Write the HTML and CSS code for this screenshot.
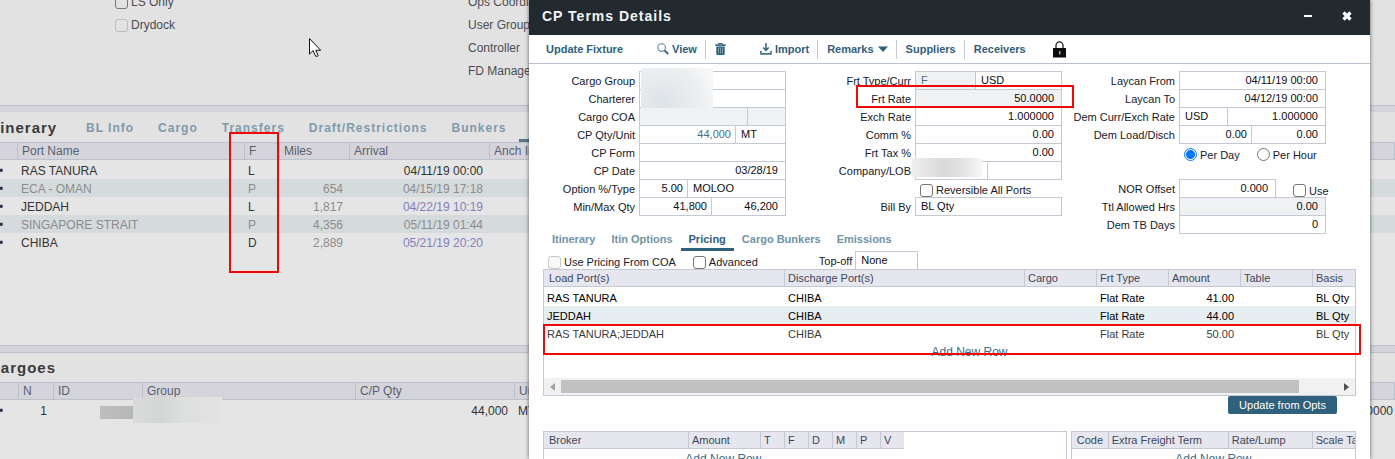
FILE: index.html
```
<!DOCTYPE html>
<html lang="en">
<head>
<meta charset="utf-8">
<title>CP Terms Details</title>
<link rel="stylesheet" href="styles.css">
</head>
<body>
<main class="app">
  <section class="voyage">
    <div class="flags">
      <label class="check"><input type="checkbox">LS Only</label>
      <label class="check"><input type="checkbox" disabled>Drydock</label>
    </div>
    <div class="owners">
      <span>Ops Coordinator</span>
      <span>User Group</span>
      <span>Controller</span>
      <span>FD Manager</span>
    </div>
  </section>

  <div class="splitter splitter-open"></div>
  <section class="itinerary">
    <div class="panel-head">
      <h2>Itinerary</h2>
      <nav class="panel-tabs">
        <a href="#">BL Info</a><a href="#">Cargo</a><a href="#">Transfers</a><a href="#">Draft/Restrictions</a><a href="#">Bunkers</a><span class="current"></span>
      </nav>
    </div>
    <table class="grid">
      <colgroup><col class="w30"><col class="w227"><col class="w35"><col class="w70"><col class="w140"><col></colgroup>
      <thead><tr><th></th><th>Port Name</th><th>F</th><th>Miles</th><th>Arrival</th><th>Anch In</th></tr></thead>
      <tbody>
        <tr><td class="dot">•</td><td>RAS TANURA</td><td>L</td><td></td><td class="num">04/11/19 00:00</td><td></td></tr>
        <tr class="passing"><td class="dot">•</td><td>ECA - OMAN</td><td>P</td><td class="num dim">654</td><td class="num">04/15/19 17:18</td><td></td></tr>
        <tr><td class="dot">•</td><td>JEDDAH</td><td>L</td><td class="num dim">1,817</td><td class="num computed">04/22/19 10:19</td><td></td></tr>
        <tr class="passing"><td class="dot">•</td><td>SINGAPORE STRAIT</td><td>P</td><td class="num dim">4,356</td><td class="num">05/11/19 01:44</td><td></td></tr>
        <tr><td class="dot">•</td><td>CHIBA</td><td>D</td><td class="num dim">2,889</td><td class="num computed">05/21/19 20:20</td><td></td></tr>
      </tbody>
    </table>
  </section>

  <div class="splitter"></div>
  <section class="cargoes">
    <div class="panel-head"><h2>Cargoes</h2></div>
    <table class="grid">
      <colgroup><col class="w31"><col class="w35"><col class="w89"><col class="w213"><col class="w159"><col class="w140"><col></colgroup>
      <thead><tr><th></th><th>N</th><th>ID</th><th>Group</th><th>C/P Qty</th><th>Unit</th><th></th></tr></thead>
      <tbody>
        <tr><td class="dot">•</td><td class="num">1</td><td class="hidden-id"><i class="mask mask-id"></i></td><td class="hidden-group"><i class="mask mask-group"></i></td><td class="num">44,000</td><td>MT</td><td class="num edge">0.0000</td></tr>
      </tbody>
    </table>
  </section>
</main>

<svg class="pointer" viewBox="0 0 12 19"><path d="M.5 .5v15.6l3.6-3.5 2.5 5.6h2.2l.3-.7-2.3-5.2h4.9z" fill="#fff" stroke="#111" stroke-width="1"/></svg>

<section class="dialog" role="dialog" aria-labelledby="dialog-title">
  <header class="titlebar">
    <h1 id="dialog-title">CP Terms Details</h1>
    <button class="win" type="button" aria-label="Minimize"><svg viewBox="0 0 10 10"><path d="M1 5h8" stroke="#fff" stroke-width="2"/></svg></button>
    <button class="win" type="button" aria-label="Close"><svg viewBox="0 0 10 10"><path d="M1.500 1.500l7 7M8.500 1.500l-7 7" stroke="#fff" stroke-width="3.200"/></svg></button>
  </header>

  <div class="toolbar">
    <button type="button" class="update">Update Fixture</button>
    <button type="button" class="ruled view"><svg class="ico" viewBox="0 0 12 12"><circle cx="4.6" cy="4.6" r="3.8" fill="none" stroke="#5d86a0" stroke-width="1.1"/><path d="M7.4 7.4l3.8 3.6" stroke="#2f607c" stroke-width="1.8"/></svg>View</button>
    <button type="button" class="trash" aria-label="Delete"><svg viewBox="0 0 11 12"><path d="M3.5 1.5V.6h4v.9" fill="none" stroke="#2f607c"/><path d="M.3 1.3h10.4v1.6H.3z" fill="#2f607c"/><path d="M1.3 3.4h8.4V11q0 1-1 1H2.300q-1 0-1-1z" fill="#2f607c"/><path d="M3.500 4.600v6M5.500 4.600v6M7.500 4.600v6" stroke="#8fabbb" stroke-width=".8"/></svg></button>
    <button type="button" class="ruled import"><svg class="ico" viewBox="0 0 12 12"><path d="M6 0v6M3.300 4.600L6 7.400l2.700-2.800" fill="none" stroke="#2f607c" stroke-width="1.5"/><path d="M1 8v2.800h10V8" fill="none" stroke="#47728b" stroke-width="1.7"/></svg>Import</button>
    <button type="button" class="ruled">Remarks<svg class="caret" viewBox="0 0 10 6"><path d="M0 .5h10L5 6z" fill="#2f607c"/></svg></button>
    <button type="button" class="ruled">Suppliers</button>
    <button type="button">Receivers</button>
    <svg class="lock" viewBox="0 0 13 17"><path d="M3 8V4.500a3.500 3.700 0 0 1 7 0V8" fill="none" stroke="#222" stroke-width="1.300"/><path d="M0 7h13v9.500H0z" fill="#0c0c0c"/><path d="M6 10h1.400v3.500H6z" fill="#9db7c8"/></svg>
  </div>

  <form class="terms">
    <div class="column c1">
      <label for="group">Cargo Group</label><div class="field"><input id="group"></div>
      <label for="charterer">Charterer</label><div class="field"><input id="charterer"></div>
      <label for="coa">Cargo COA</label><div class="field"><input id="coa" class="ro s107" readonly><input class="ro" readonly aria-label="COA line"></div>
      <label for="qty">CP Qty/Unit</label><div class="field"><input id="qty" class="n link s95" value="44,000"><input value="MT" aria-label="Unit"></div>
      <label for="form">CP Form</label><div class="field"><input id="form"></div>
      <label for="date">CP Date</label><div class="field"><input id="date" class="n" value="03/28/19"></div>
      <label for="option">Option %/Type</label><div class="field"><input id="option" class="n s47" value="5.00"><input value="MOLOO" aria-label="Option type"></div>
      <label for="min">Min/Max Qty</label><div class="field"><input id="min" class="n s71" value="41,800"><input class="n" value="46,200" aria-label="Max quantity"></div>
      <i class="mask mask-party"></i>
    </div>
    <div class="column c2">
      <label for="ftype">Frt Type/Curr</label><div class="field"><input id="ftype" class="ro link s59" value="F" readonly><input value="USD" aria-label="Freight currency"></div>
      <label for="frate">Frt Rate</label><div class="field"><input id="frate" class="n ro" value="50.0000" readonly></div>
      <label for="exch">Exch Rate</label><div class="field"><input id="exch" class="n" value="1.000000"></div>
      <label for="comm">Comm %</label><div class="field"><input id="comm" class="n" value="0.00"></div>
      <label for="tax">Frt Tax %</label><div class="field"><input id="tax" class="n" value="0.00"></div>
      <label for="company">Company/LOB</label><div class="field"><input id="company" class="s71"><input aria-label="LOB"></div>
      <label class="check inset"><input type="checkbox">Reversible All Ports</label>
      <label for="bill">Bill By</label><div class="field"><input id="bill" value="BL Qty"></div>
      <i class="mask mask-company"></i>
      <div class="marker"></div>
    </div>
    <div class="column c3">
      <label for="lfrom">Laycan From</label><div class="field"><input id="lfrom" class="n" value="04/11/19 00:00"></div>
      <label for="lto">Laycan To</label><div class="field"><input id="lto" class="n" value="04/12/19 00:00"></div>
      <label for="dcurr">Dem Curr/Exch Rate</label><div class="field"><input id="dcurr" class="s47" value="USD"><input class="n" value="1.000000" aria-label="Demurrage exchange rate"></div>
      <label for="dload">Dem Load/Disch</label><div class="field"><input id="dload" class="n s71" value="0.00"><input class="n" value="0.00" aria-label="Demurrage discharge"></div>
      <div class="period">
        <label class="check"><input type="radio" name="per" checked>Per Day</label>
        <label class="check"><input type="radio" name="per">Per Hour</label>
      </div>
      <label for="nor" class="nor">NOR Offset</label><div class="nor offset"><div class="field"><input id="nor" class="n" value="0.000"></div><label class="check"><input type="checkbox">Use</label></div>
      <label for="hrs">Ttl Allowed Hrs</label><div class="field"><input id="hrs" class="n ro" value="0.00" readonly></div>
      <label for="tb">Dem TB Days</label><div class="field"><input id="tb" class="n" value="0"></div>
    </div>
  </form>

  <nav class="tabs">
    <a href="#">Itinerary</a><a href="#">Itin Options</a><a href="#" class="current">Pricing</a><a href="#">Cargo Bunkers</a><a href="#">Emissions</a>
  </nav>

  <div class="options">
    <label class="check"><input type="checkbox" disabled>Use Pricing From COA</label>
    <label class="check advanced"><input type="checkbox">Advanced</label>
    <label class="topoff" for="topoff">Top-off</label>
    <div class="field"><input id="topoff" value="None"></div>
  </div>

  <div class="box pricing">
    <table class="lines">
      <colgroup><col class="w241"><col><col class="w72"><col class="w72"><col class="w72"><col class="w72"><col class="w42"></colgroup>
      <thead><tr><th>Load Port(s)</th><th>Discharge Port(s)</th><th>Cargo</th><th>Frt Type</th><th>Amount</th><th>Table</th><th>Basis</th></tr></thead>
      <tbody>
        <tr><td>RAS TANURA</td><td>CHIBA</td><td></td><td>Flat Rate</td><td class="num">41.00</td><td></td><td>BL Qty</td></tr>
        <tr class="alt"><td>JEDDAH</td><td>CHIBA</td><td></td><td>Flat Rate</td><td class="num">44.00</td><td></td><td>BL Qty</td></tr>
        <tr class="auto"><td>RAS TANURA;JEDDAH</td><td>CHIBA</td><td></td><td>Flat Rate</td><td class="num">50.00</td><td></td><td>BL Qty</td></tr>
      </tbody>
    </table>
    <a href="#" class="add">Add New Row</a>
    <div class="scroll">
      <svg viewBox="0 0 5 8"><path d="M5 0v8L0 4z" fill="#a3a3a3"/></svg>
      <div class="track"><div class="thumb"></div></div>
      <svg viewBox="0 0 5 8"><path d="M0 0v8l5-4z" fill="#505050"/></svg>
    </div>
    <div class="marker"></div>
  </div>
  <div class="actions"><button type="button">Update from Opts</button></div>

  <div class="bottom">
    <div class="box brokers">
      <table class="lines">
        <colgroup><col class="w145"><col class="w72"><col class="w24"><col class="w24"><col class="w24"><col class="w24"><col class="w24"><col class="w23"></colgroup>
        <thead><tr><th>Broker</th><th>Amount</th><th>T</th><th>F</th><th>D</th><th>M</th><th>P</th><th>V</th></tr></thead>
      </table>
      <a href="#" class="add">Add New Row</a>
    </div>
    <div class="box extras">
      <table class="lines">
        <colgroup><col class="w37"><col class="w120"><col class="w84"><col></colgroup>
        <thead><tr><th>Code</th><th>Extra Freight Term</th><th>Rate/Lump</th><th>Scale Table</th></tr></thead>
      </table>
      <a href="#" class="add">Add New Row</a>
    </div>
  </div>
</section>
<div class="marker marker-function"></div>
</body>
</html>
```
FILE: styles.css
```
* { box-sizing: border-box; }
html, body { height: 100%; }
body {
  margin: 0;
  position: relative;
  overflow: hidden;
  background: #e2e2e2;
  font-family: "Liberation Sans", Arial, sans-serif;
  font-size: 12px;
  color: #333;
}
a { text-decoration: none; }
button { font: inherit; border: 0; padding: 0; background: none; }
table { border-collapse: separate; border-spacing: 0; table-layout: fixed; width: 100%; }
td, th { padding: 0; font-weight: normal; text-align: left; white-space: nowrap; overflow: hidden; }
.num { text-align: right; }
.check { display: flex; align-items: center; gap: 3px; white-space: nowrap; }
.check input {
  appearance: none;
  flex: none;
  width: 13px;
  height: 13px;
  margin: 0;
  border: 1px solid #767676;
  border-radius: 3px;
  background: #fff;
}
.check input[type="radio"] { border-radius: 50%; }
.check input[type="radio"]:checked {
  border-color: #0075ff;
  background: radial-gradient(circle, #0075ff 4px, #fff 5px);
}
.check input:disabled { border-color: #c8c8c8; background: #f7f7f7; }

/* Voyage page behind the dialog */
.app { margin-left: -12px; height: 100%; overflow: hidden; }
.voyage { display: flex; height: 105px; color: #4a4d52; }
.flags, .owners { display: flex; flex-direction: column; margin-top: -9px; line-height: 23px; }
.flags { width: 353px; margin-left: 127px; }
.flags .check { height: 23px; }
.flags .check input { background: transparent; }
.flags .check input:disabled { border-color: #bdbdbd; }
.splitter { height: 8px; background: #d5d4db; border: solid #bcc0ca; border-width: 1px 0; }
.splitter-open { height: 7px; border-bottom: 0; }
.panel-head { display: flex; align-items: center; height: 30px; background: #e2e2e2; }
.panel-head h2 { margin: 0; padding-left: 1px; width: 90px; font-size: 15px; letter-spacing: 1px; color: #3a3a3c; }
.panel-tabs { display: flex; align-self: stretch; gap: 8px; }
.panel-tabs a {
  padding: 0 8px;
  line-height: 33px;
  font-weight: bold;
  letter-spacing: 1px;
  color: #7f9aab;
}
.panel-tabs .current { width: 80px; margin-left: -4px; border-bottom: 3px solid #54788c; }
.itinerary { height: 233px; background: #e5e5e5; }
.cargoes { background: #e5e5e5; height: 110px; }
.cargoes .panel-head { height: 29px; }
.grid th {
  height: 18px;
  padding-left: 4px;
  line-height: 16px;
  color: #5a6070;
  background: #d5d4db;
  border: solid #bcc0ca;
  border-width: 1px 1px 1px 0;
}
.grid tbody::before { content: ""; display: block; height: 1px; }
.grid td { height: 18px; line-height: 16px; padding: 2px 0 0 3px; }
.grid td.num { padding-right: 7px; }
.grid td.edge { padding-right: 2px; }
.grid td.dot { padding-left: 11px; }
.grid .passing { background: #d5dadc; color: #8c8c8c; }
.grid .passing .dot { color: #333; }
.grid .dim { color: #8c8c8c; }
.grid .computed { color: #8380bd; }
.grid .hidden-id, .grid .hidden-group { position: relative; overflow: visible; }

.w23 { width: 23px; } .w24 { width: 24px; } .w30 { width: 30px; } .w31 { width: 31px; }
.w35 { width: 35px; } .w37 { width: 37px; } .w42 { width: 42px; } .w70 { width: 70px; }
.w72 { width: 72px; } .w84 { width: 84px; } .w89 { width: 89px; } .w120 { width: 120px; }
.w140 { width: 140px; } .w145 { width: 145px; } .w159 { width: 159px; } .w213 { width: 213px; }
.w227 { width: 227px; } .w241 { width: 241px; }

/* Redaction patches */
.mask { position: absolute; }
.mask-id { left: 46px; top: 5px; width: 33px; height: 13px; background: linear-gradient(90deg, #bfbdbc, #b5b8b8); }
.mask-group { left: -10px; top: -4px; width: 89px; height: 26px; background: linear-gradient(90deg, #d9dbdb, #d4d6d6 30%, #dedfdf 60%, #e3e3e3); }
.mask-party { left: 112px; top: -3px; width: 72px; height: 40px; background: radial-gradient(circle at 30% 90%, #dde2e7, #eceff1 60%, #f9fafa); }
.mask-company { left: 126px; top: 87px; width: 70px; height: 19px; background: linear-gradient(90deg, #efefef, #d8d9d9 45%, #e2e2e2 70%, #f6f6f6); }

.pointer { position: absolute; left: 309px; top: 38px; width: 12px; height: 19px; }
.marker { position: absolute; border: 2px solid #ee0808; pointer-events: none; }
.marker-function { left: 229px; top: 132px; width: 50px; height: 141px; }

/* Dialog */
.dialog {
  position: absolute;
  top: 0;
  bottom: 0;
  left: 529px;
  right: 25px;
  overflow: hidden;
  background: #fff;
  box-shadow: 0 0 4px rgba(0, 0, 0, .6);
  font-size: 11px;
  color: #16202a;
}
.titlebar { display: flex; align-items: center; height: 35px; padding: 0 18px 3px 13px; background: #222a30; color: #f2f4f5; }
.titlebar h1 { flex: 1; margin: 0; font-size: 14px; letter-spacing: 1px; }
.win { height: 10px; margin-left: 29px; }
.win svg { display: block; width: 10px; height: 10px; }

.toolbar {
  display: flex;
  align-items: center;
  height: 29px;
  padding-left: 17px;
  border-bottom: 1px solid #b9c3d0;
  font-weight: bold;
  color: #2f607c;
}
.toolbar button { display: flex; align-items: center; height: 19px; margin-right: 9px; color: inherit; white-space: nowrap; }
.toolbar button.ruled { padding-right: 8px; border-right: 1px solid #c4ccd6; }
.toolbar .update { margin-right: 34px; }
.toolbar .trash { margin-right: 34px; }
.toolbar .ico { width: 12px; height: 12px; margin-right: 3px; }
.toolbar .trash svg { width: 11px; height: 12px; }
.toolbar .caret { width: 10px; height: 6px; margin-left: 4px; }
.toolbar .lock { width: 13px; height: 17px; margin-left: 18px; }

.terms { display: flex; padding-top: 7px; }
.column { position: relative; display: grid; grid-auto-rows: 18px; align-content: start; column-gap: 4px; }
.column > label { line-height: 20px; text-align: right; white-space: nowrap; }
.c1 { grid-template-columns: 106px 147px; }
.c2 { grid-template-columns: 125px 147px; }
.c3 { grid-template-columns: 113px 147px; }
.field { display: flex; height: 19px; border: 1px solid #c4c9d6; }
.field input {
  flex: 1;
  width: 0;
  min-width: 0;
  margin: 0;
  padding: 0 5px 1px;
  border: 0;
  border-radius: 0;
  outline: 0;
  background: #fff;
  font: inherit;
  line-height: 16px;
  color: #0c0c14;
}
.field input + input { border-left: 1px solid #c4c9d6; }
.field input.n { text-align: right; padding-right: 7px; }
.field input.n:not(:last-child) { padding-right: 4px; }
.field input.ro { background: #f0f1f3; }
.field input.link { color: #47708a; }
.field .s47 { flex: none; width: 47px; }
.field .s59 { flex: none; width: 59px; }
.field .s71 { flex: none; width: 71px; }
.field .s95 { flex: none; width: 95px; }
.field .s107 { flex: none; width: 107px; }
.column > .check.inset { grid-column: 2; padding: 4px 0 0 5px; line-height: 14px; }
.period { grid-column: 1 / -1; display: flex; gap: 17px; padding: 5px 0 0 122px; }
.column > .nor { margin-top: 18px; }
.c3 { grid-template-rows: repeat(5, 18px) 36px; }
.offset { display: flex; gap: 17px; }
.offset .field { width: 99px; }
.offset .check { height: 13px; margin-top: 5px; }
.column .offset .field { flex: none; width: 97px; }
.c2 .marker { left: 70px; top: 14px; width: 218px; height: 23px; }

.tabs { display: flex; padding: 0 15px; height: 18px; }
.tabs a { padding: 0 8px; line-height: 12px; font-weight: bold; color: #7393a6; }
.tabs .current { color: #2f607c; border-bottom: 3px solid #2f607c; }
.options { display: flex; height: 18px; padding-left: 19px; }
.options .check { padding-top: 4px; height: 18px; }
.options .advanced { margin-left: 17px; }
.options .topoff { margin: 0 3px 0 61px; line-height: 20px; }
.options .field { width: 63px; }
.box { position: relative; border: 1px solid #c4c9d6; background: #fff; }
.pricing { display: flex; flex-direction: column; height: 127px; margin: 0 14px; }
.lines th {
  height: 17px;
  padding-left: 3px;
  line-height: 16px;
  color: #3c465c;
  background: #e6e6ee;
  border: solid #c4c9d6;
  border-width: 0 1px 1px 0;
}
.lines th:first-child { padding-left: 5px; }
.lines th:last-child { border-right: 0; }
.lines tbody::before { content: ""; display: block; height: 1px; }
.lines td { height: 18px; padding: 2px 0 0 3px; line-height: 16px; color: #000; }
.lines td.num { padding-right: 7px; }
.lines .alt { background: #e7eef2; }
.lines .auto td { color: #3c3c3c; }
.add { display: block; line-height: 20px; font-size: 12px; text-align: center; color: #3d6b84; }
.pricing .add { padding-left: 40px; }
.scroll { display: flex; align-items: center; gap: 6px; height: 17px; margin-top: auto; padding: 0 6px; background: #f1f1f1; }
.scroll svg { width: 5px; height: 8px; }
.track { flex: 1; }
.thumb { width: 95%; height: 13px; background: #c1c1c1; }
.pricing .marker { left: -1px; right: -6px; top: 54px; height: 31px; }
.actions { display: flex; justify-content: flex-end; padding-right: 33px; }
.actions button { width: 109px; height: 18px; border-radius: 2px; background: #2f607c; color: #fff; }
.bottom { display: flex; gap: 4px; margin: 17px 14px 0; }
.box.brokers { flex: 525; min-width: 0; height: 60px; }
.box.extras { flex: 285; min-width: 0; height: 60px; overflow: hidden; }
.brokers .lines { width: 360px; }
.brokers .add { padding-right: 163px; }
```
